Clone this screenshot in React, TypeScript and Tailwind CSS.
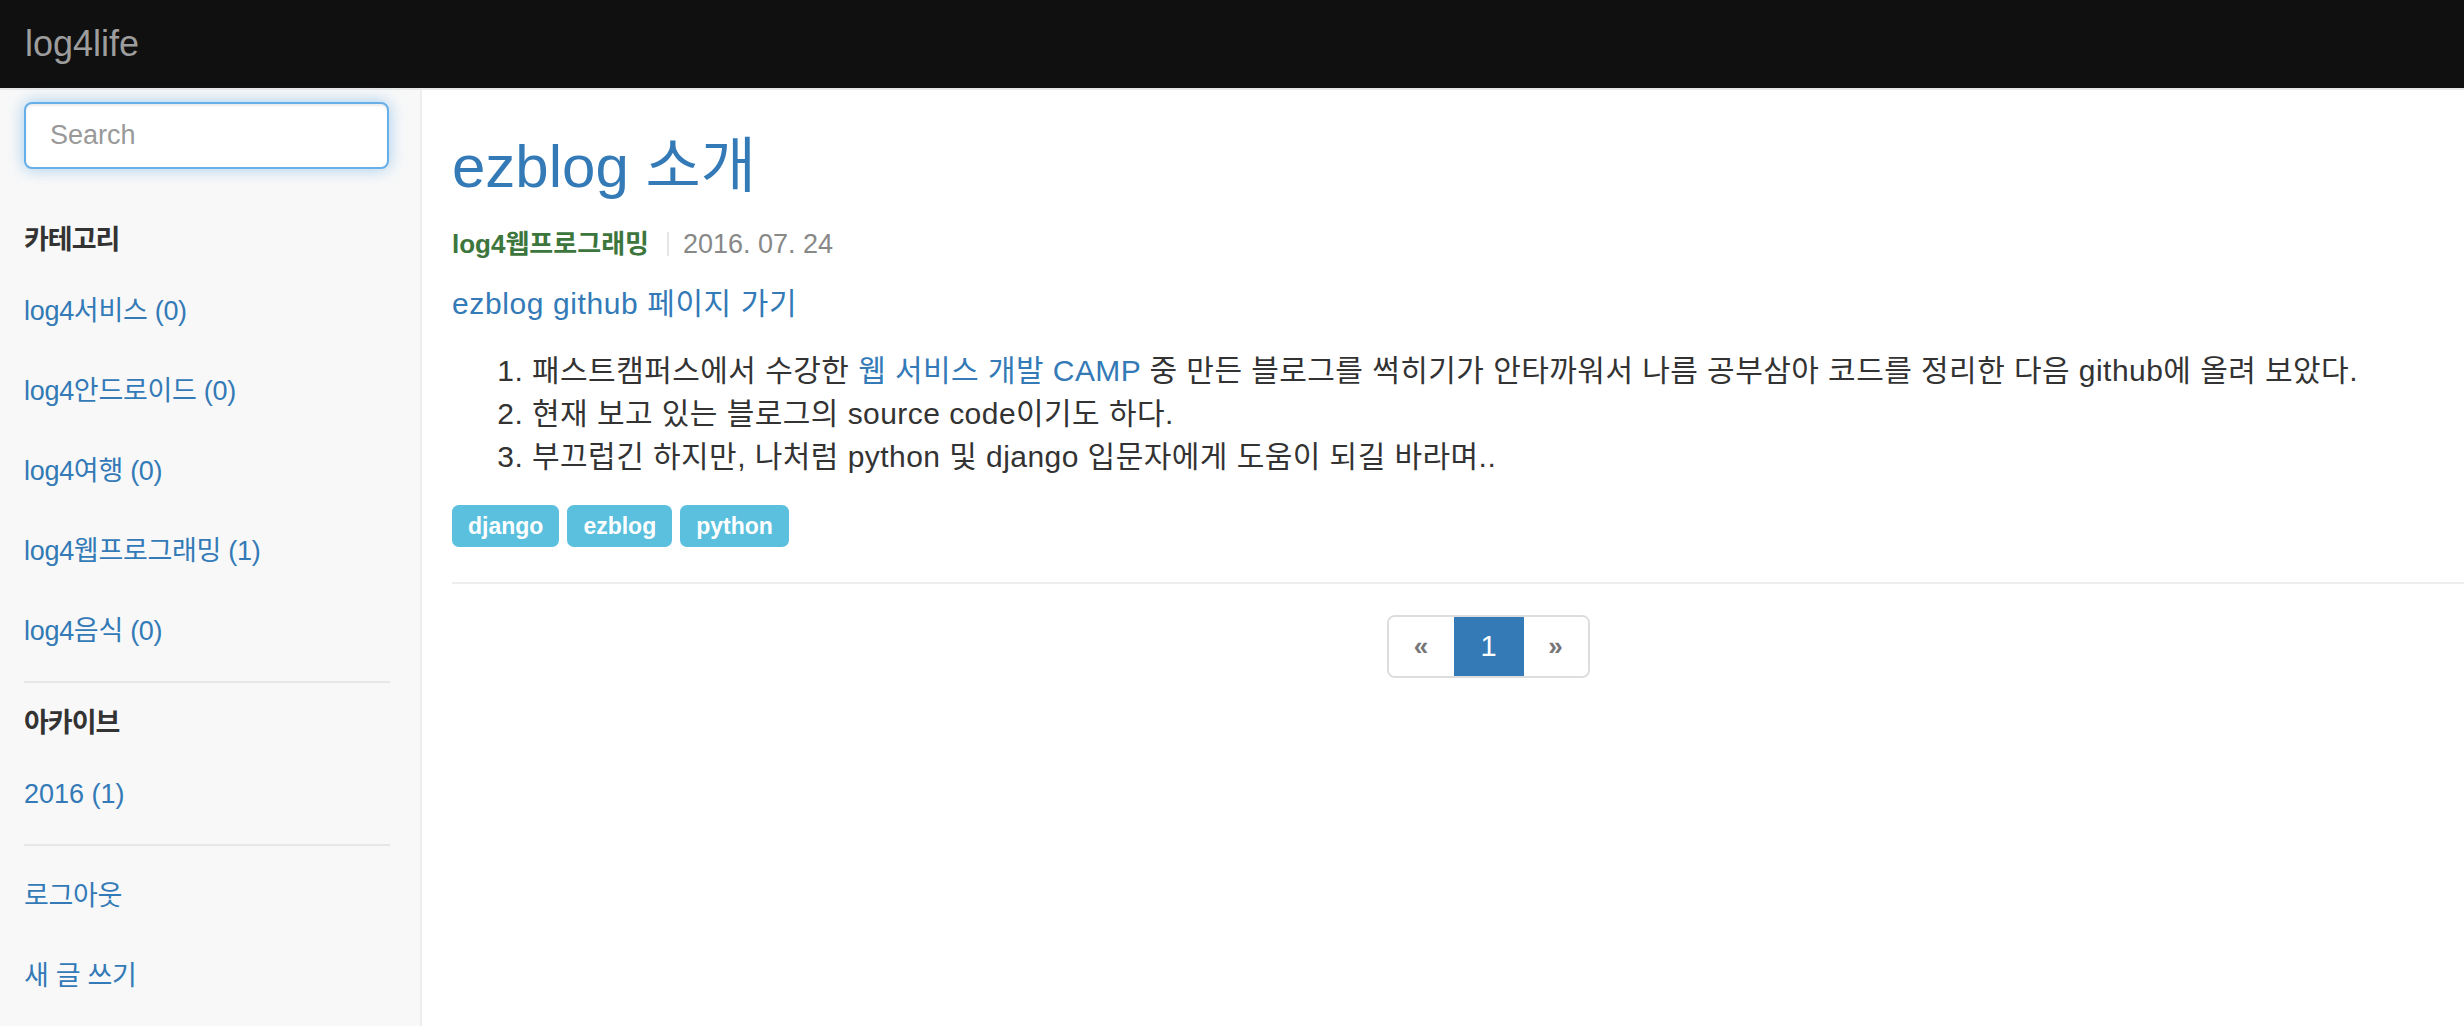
const categories = [
  { name: "log4서비스", count: 0 },
  { name: "log4안드로이드", count: 0 },
  { name: "log4여행", count: 0 },
  { name: "log4웹프로그래밍", count: 1 },
  { name: "log4음식", count: 0 },
];

const tags = ["django", "ezblog", "python"];

function Sidebar() {
  return (
    <aside className="w-[422px] shrink-0 bg-[#f8f8f8] border-r-2 border-[#eeeeee] px-[24px]">
      <input
        type="text"
        placeholder="Search"
        className="mt-[12px] block h-[67px] w-[365px] rounded-[8px] border-2 border-[#66afe9] bg-white px-[24px] text-[27px] text-[#555] placeholder:text-[#999] outline-none shadow-[inset_0_2px_2px_rgba(0,0,0,0.075),0_0_16px_rgba(102,175,233,0.6)]"
      />

      <h4 className="mt-[51px] h-[40px] leading-[40px] text-[27px] font-bold text-[#333] tracking-[-1px]">
        카테고리
      </h4>
      <ul className="mt-[11px]">
        {categories.map((c) => (
          <li key={c.name}>
            <a className="flex h-[80px] items-center text-[27px] text-[#337ab7] tracking-[-0.3px]">
              {c.name} ({c.count})
            </a>
          </li>
        ))}
      </ul>

      <div className="mt-[10px] h-[2px] w-[366px] bg-[#e7e7e7]" />

      <h4 className="mt-[20px] h-[40px] leading-[40px] text-[27px] font-bold text-[#333] tracking-[-1px]">
        아카이브
      </h4>
      <ul className="mt-[11px]">
        <li>
          <a className="flex h-[80px] items-center text-[27px] text-[#337ab7]">2016 (1)</a>
        </li>
      </ul>

      <div className="mt-[10px] h-[2px] w-[366px] bg-[#e7e7e7]" />

      <ul className="mt-[10px]">
        <li>
          <a className="flex h-[80px] items-center text-[27px] text-[#337ab7] tracking-[-0.3px]">로그아웃</a>
        </li>
        <li>
          <a className="flex h-[80px] items-center text-[27px] text-[#337ab7] tracking-[-0.3px]">새 글 쓰기</a>
        </li>
      </ul>
    </aside>
  );
}

function Post() {
  return (
    <article>
      <h2 className="mt-[44px] h-[66px] leading-[66px] text-[60px] text-[#337ab7]">ezblog 소개</h2>

      <div className="mt-[24px] flex h-[40px] items-center">
        <span className="text-[26px] font-bold text-[#3c763d]">log4웹프로그래밍</span>
        <span className="ml-[18px] mr-[14px] h-[24px] w-[2px] bg-[#e5e5e5]" />
        <span className="text-[27px] text-[#888]">2016. 07. 24</span>
      </div>

      <a className="mt-[18px] block h-[43px] leading-[43px] text-[30px] text-[#337ab7] tracking-[0.6px]">
        ezblog github 페이지 가기
      </a>

      <ol className="mt-[24px] list-decimal pl-[80px] text-[30px] leading-[43px] text-[#333] tracking-[0.45px] whitespace-nowrap">
        <li>
          패스트캠퍼스에서 수강한 <a className="text-[#337ab7]">웹 서비스 개발 CAMP</a> 중 만든 블로그를
          썩히기가 안타까워서 나름 공부삼아 코드를 정리한 다음 github에 올려 보았다.
        </li>
        <li>현재 보고 있는 블로그의 source code이기도 하다.</li>
        <li>부끄럽긴 하지만, 나처럼 python 및 django 입문자에게 도움이 되길 바라며..</li>
      </ol>

      <div className="mt-[27px] flex gap-[8px]">
        {tags.map((t) => (
          <span
            key={t}
            className="flex h-[42px] items-center rounded-[7px] bg-[#5bc0de] px-[16px] text-[23px] font-bold text-white"
          >
            {t}
          </span>
        ))}
      </div>
    </article>
  );
}

function Pagination() {
  return (
    <div className="mt-[31px] flex justify-center pl-[60px]">
      <div className="flex h-[63px] overflow-hidden rounded-[8px] border-2 border-[#dddddd]">
        <span className="flex w-[65px] items-center justify-center bg-white text-[26px] font-bold text-[#777]">
          «
        </span>
        <span className="flex w-[70px] items-center justify-center bg-[#337ab7] text-[29px] text-white">
          1
        </span>
        <span className="flex w-[64px] items-center justify-center bg-white text-[26px] font-bold text-[#777]">
          »
        </span>
      </div>
    </div>
  );
}

export default function App() {
  return (
    <div className="min-h-screen bg-white font-['Liberation_Sans','Noto_Sans_CJK_KR',sans-serif] flex flex-col">
      <header className="h-[90px] shrink-0 border-b-2 border-[#e7e7e7] bg-[#101010] flex items-center px-[25px]">
        <span className="text-[36px] text-[#9d9d9d]">log4life</span>
      </header>

      <div className="flex flex-1">
        <Sidebar />
        <main className="flex-1 min-w-0 pl-[30px]">
          <Post />
          <hr className="mt-[35px] border-0 h-[2px] bg-[#eeeeee]" />
          <Pagination />
        </main>
      </div>
    </div>
  );
}
